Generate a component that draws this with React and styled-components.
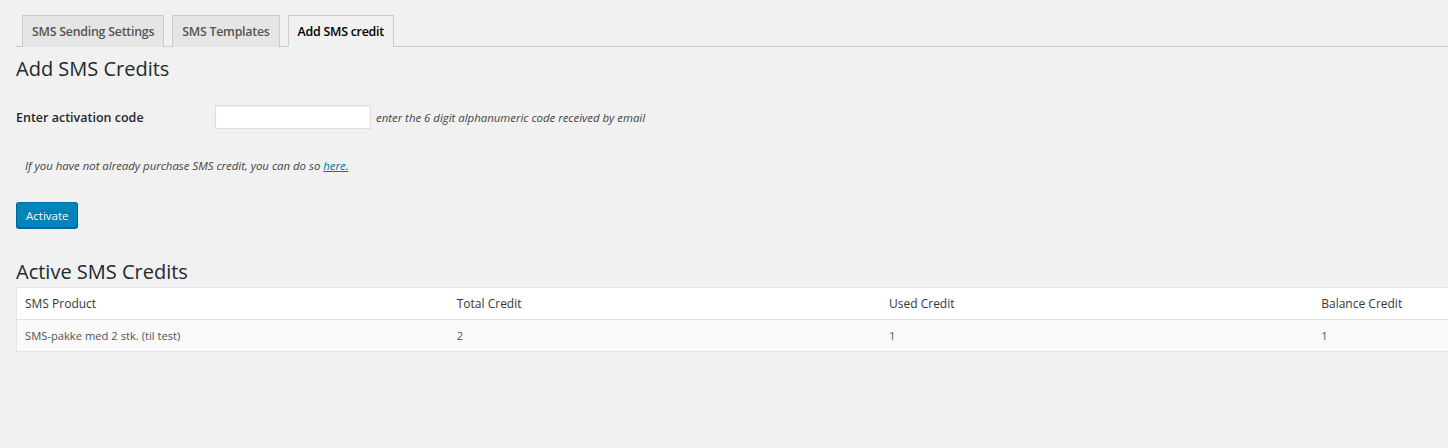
import styled, { createGlobalStyle } from "styled-components";

const GlobalStyle = createGlobalStyle`
  html, body {
    margin: 0;
    padding: 0;
    background: #f1f1f1;
    overflow: hidden;
  }
  body {
    font-family: "Open Sans", "Noto Sans", sans-serif;
    color: #444;
    font-size: 13px;
  }
`;

const Wrap = styled.div`
  padding: 15px 0 0 16px;
  width: 1432px;
  overflow: hidden;
`;

const TabBar = styled.nav`
  display: flex;
  gap: 8px;
  padding-left: 6px;
  border-bottom: 1px solid #ccc;
  height: 31px;
`;

const Tab = styled.a`
  box-sizing: border-box;
  height: 32px;
  padding: 0 9px;
  display: flex;
  align-items: center;
  font-size: 12.4px;
  font-weight: 600;
  border: 1px solid #ccc;
  border-bottom: ${(p) => (p.$active ? "1px solid #f1f1f1" : "none")};
  background: ${(p) => (p.$active ? "#f1f1f1" : "#e5e5e5")};
  color: ${(p) => (p.$active ? "#000" : "#555")};
  text-decoration: none;
  letter-spacing: -0.25px;
`;

const Heading = styled.h2`
  margin: ${(p) => p.$top}px 0 0;
  font-size: 20px;
  font-weight: 400;
  color: #23282d;
  line-height: 29px;
`;

const FieldRow = styled.div`
  display: flex;
  align-items: center;
  margin-top: 22px;
`;

const Label = styled.label`
  width: 199px;
  font-size: 12.5px;
  font-weight: 600;
  color: #23282d;
`;

const Input = styled.input`
  box-sizing: border-box;
  width: 156px;
  height: 24px;
  border: 1px solid #ddd;
  box-shadow: inset 0 1px 2px rgba(0, 0, 0, 0.07);
  background: #fff;
  margin: 0;
`;

const Hint = styled.span`
  margin-left: 5px;
  font-size: 11.4px;
  font-style: italic;
  color: #444;
`;

const Note = styled.p`
  margin: 29px 0 0 9px;
  font-size: 11.4px;
  font-style: italic;
  color: #444;
  a {
    color: #0073aa;
  }
`;

const Button = styled.button`
  margin-top: 29px;
  box-sizing: border-box;
  height: 26px;
  padding: 0 9px;
  background: #0085ba;
  border: 1px solid;
  border-color: #0073aa #006799 #006799;
  border-radius: 3px;
  box-shadow: 0 1px 0 #006799;
  color: #fff;
  font-family: inherit;
  font-size: 11.5px;
  text-shadow: 0 -1px 1px #006799;
`;

const Table = styled.table`
  width: 1730px;
  border-collapse: collapse;
  border: 1px solid #e5e5e5;
  box-shadow: 0 1px 1px rgba(0, 0, 0, 0.04);
  table-layout: fixed;
  margin-top: 1px;
`;

const Th = styled.th`
  text-align: left;
  font-weight: 400;
  font-size: 12px;
  color: #32373c;
  padding: 0 8px;
  height: 31px;
  background: #fff;
  border-bottom: 1px solid #e1e1e1;
`;

const Td = styled.td`
  font-size: 11.2px;
  color: #555;
  padding: 0 8px;
  height: 31px;
  background: #f9f9f9;
`;

const rows = [
  { product: "SMS-pakke med 2 stk. (til test)", total: 2, used: 1, balance: 1 },
];

export default function App() {
  return (
    <>
      <GlobalStyle />
      <Wrap>
        <TabBar>
          <Tab href="#">SMS Sending Settings</Tab>
          <Tab href="#">SMS Templates</Tab>
          <Tab href="#" $active>
            Add SMS credit
          </Tab>
        </TabBar>
        <Heading $top={7}>Add SMS Credits</Heading>
        <FieldRow>
          <Label>Enter activation code</Label>
          <Input type="text" />
          <Hint>enter the 6 digit alphanumeric code received by email</Hint>
        </FieldRow>
        <Note>
          If you have not already purchase SMS credit, you can do so <a href="#">here.</a>
        </Note>
        <Button>Activate</Button>
        <Heading $top={29}>Active SMS Credits</Heading>
        <Table>
          <thead>
            <tr>
              <Th>SMS Product</Th>
              <Th>Total Credit</Th>
              <Th>Used Credit</Th>
              <Th>Balance Credit</Th>
            </tr>
          </thead>
          <tbody>
            {rows.map((r) => (
              <tr key={r.product}>
                <Td>{r.product}</Td>
                <Td>{r.total}</Td>
                <Td>{r.used}</Td>
                <Td>{r.balance}</Td>
              </tr>
            ))}
          </tbody>
        </Table>
      </Wrap>
    </>
  );
}
